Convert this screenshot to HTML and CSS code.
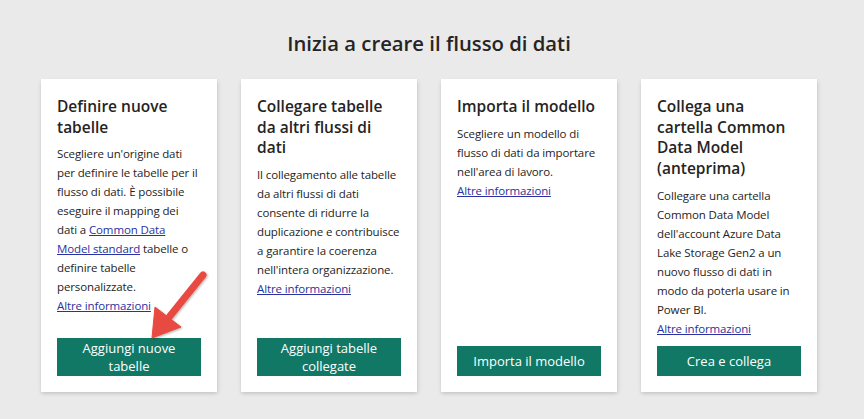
FILE: index.html
```html
<!DOCTYPE html>
<html lang="it">
<head>
<meta charset="utf-8">
<title>Inizia a creare il flusso di dati</title>
<link rel="stylesheet" href="styles.css">
</head>
<body>
<main class="page">
  <h1 class="heading">Inizia a creare il flusso di dati</h1>
  <div class="cards">
    <section class="card">
      <div class="card-body">
        <h2 class="card-title">Definire nuove tabelle</h2>
        <p class="card-text">Scegliere un'origine dati per definire le tabelle per il flusso di dati. È possibile eseguire il mapping dei dati a <a href="#" class="link">Common Data Model standard</a> tabelle o definire tabelle personalizzate.<br><a href="#" class="link">Altre informazioni</a></p>
      </div>
      <button class="btn">Aggiungi nuove tabelle</button>
    </section>
    <section class="card">
      <div class="card-body">
        <h2 class="card-title">Collegare tabelle da altri flussi di dati</h2>
        <p class="card-text">Il collegamento alle tabelle da altri flussi di dati consente di ridurre la duplicazione e contribuisce a garantire la coerenza nell'intera organizzazione.<br><a href="#" class="link">Altre informazioni</a></p>
      </div>
      <button class="btn">Aggiungi tabelle collegate</button>
    </section>
    <section class="card">
      <div class="card-body">
        <h2 class="card-title">Importa il modello</h2>
        <p class="card-text">Scegliere un modello di flusso di dati da importare nell'area di lavoro.<br><a href="#" class="link">Altre informazioni</a></p>
      </div>
      <button class="btn">Importa il modello</button>
    </section>
    <section class="card">
      <div class="card-body">
        <h2 class="card-title">Collega una cartella Common Data Model (anteprima)</h2>
        <p class="card-text">Collegare una cartella Common Data Model dell'account Azure Data Lake Storage Gen2 a un nuovo flusso di dati in modo da poterla usare in Power BI.<br><a href="#" class="link">Altre informazioni</a></p>
      </div>
      <button class="btn">Crea e collega</button>
    </section>
  </div>
  <svg class="arrow" width="864" height="419" viewBox="0 0 864 419" aria-hidden="true">
    <defs>
      <filter id="ash" x="-50%" y="-50%" width="200%" height="200%">
        <feDropShadow dx="1" dy="1" stdDeviation="1.2" flood-color="#000" flood-opacity="0.3"/>
      </filter>
    </defs>
    <g filter="url(#ash)" fill="#e8483f" stroke="#e8483f">
      <line x1="203" y1="275" x2="170" y2="316" stroke-width="7" stroke-linecap="round"/>
      <polygon points="152,338 155,307 181,327" stroke-width="1" stroke-linejoin="round"/>
    </g>
  </svg>
</main>
</body>
</html>
```
FILE: styles.css
```css
* { box-sizing: border-box; }
html, body { margin: 0; padding: 0; }
body {
  background: #eaeaea;
  font-family: "Open Sans", "Noto Sans", sans-serif;
  color: #252423;
  width: 864px;
  height: 419px;
  overflow: hidden;
}
.page {
  position: relative;
  padding: 29px 47px 0 41px;
}
.heading {
  margin: 0 0 22px;
  text-align: center;
  font-size: 20.3px;
  line-height: 28px;
  font-weight: 600;
  color: #252423;
}
.cards {
  display: flex;
  gap: 24px;
  align-items: stretch;
}
.card {
  width: 176px;
  background: #fff;
  padding: 17px 16px 16px;
  display: flex;
  flex-direction: column;
  box-shadow: 0 1.6px 3.6px rgba(0,0,0,0.13), 0 0.3px 0.9px rgba(0,0,0,0.11), 2px 2px 5px rgba(0,0,0,0.05);
}
.card-body { flex: 1; }
.card-title {
  margin: 0 0 7px;
  font-size: 15.5px;
  line-height: 20.7px;
  font-weight: 600;
  color: #252423;
}
.card-text {
  margin: 0 0 8px;
  font-size: 11.5px;
  line-height: 19px;
  letter-spacing: -0.12px;
  color: #252423;
}
.link {
  color: #2b31a0;
  text-decoration: underline;
}
.btn {
  display: flex;
  align-items: center;
  justify-content: center;
  min-height: 30px;
  width: 100%;
  padding: 1px 8px;
  border: 0;
  border-radius: 0;
  background: #117865;
  color: #fff;
  font-family: inherit;
  font-size: 13px;
  line-height: 18px;
  text-align: center;
}
.arrow {
  position: absolute;
  left: 0;
  top: 0;
  pointer-events: none;
}
```
